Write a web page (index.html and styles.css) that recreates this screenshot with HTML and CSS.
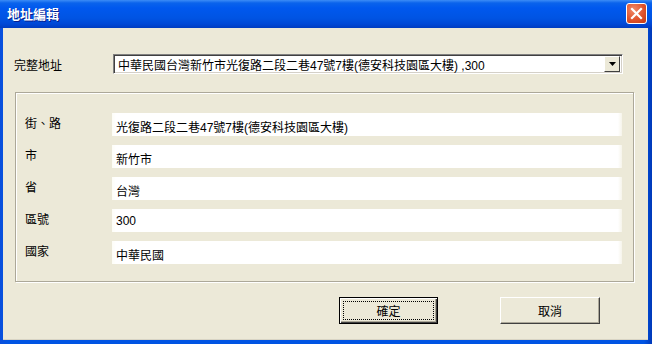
FILE: index.html
```html
<!DOCTYPE html>
<html lang="zh-Hant">
<head>
  <meta charset="UTF-8" />
  <title>地址編輯</title>
  <link rel="stylesheet" href="styles.css">
</head>
<body>

<div class="window">
  <div class="titlebar">
    <span class="title">地址編輯</span>
    <span class="close-btn">
      <svg width="13" height="13" viewBox="0 0 13 13">
        <path d="M2 2 L11 11 M11 2 L2 11" stroke="#fff" stroke-width="2.2" stroke-linecap="square"/>
      </svg>
    </span>
  </div>

  <div class="client">
    <div class="full-row">
      <span class="full-label">完整地址</span>
      <div class="combo">
        <span class="combo-text">中華民國台灣新竹市光復路二段二巷47號7樓(德安科技園區大樓) ,300</span>
        <span class="combo-btn">
          <svg width="7" height="4" viewBox="0 0 7 4"><path d="M0 0 H7 L3.5 4 Z" fill="#000"/></svg>
        </span>
      </div>
    </div>

    <div class="group">
      <div class="field-row">
        <span class="field-label">街、路</span>
        <div class="field">光復路二段二巷47號7樓(德安科技園區大樓)</div>
      </div>
      <div class="field-row">
        <span class="field-label">市</span>
        <div class="field">新竹市</div>
      </div>
      <div class="field-row">
        <span class="field-label">省</span>
        <div class="field">台灣</div>
      </div>
      <div class="field-row">
        <span class="field-label">區號</span>
        <div class="field">300</div>
      </div>
      <div class="field-row">
        <span class="field-label">國家</span>
        <div class="field">中華民國</div>
      </div>
    </div>

    <div class="buttons">
      <button class="btn btn-default"><span class="focus">確定</span></button>
      <button class="btn">取消</button>
    </div>
  </div>
</div>

</body>
</html>
```

FILE: styles.css
```css
body {
  margin: 0;
  font-family: "Liberation Sans", "Noto Sans CJK TC", sans-serif;
  font-size: 12px;
  color: #000;
  background: #fff;
}

.window {
  width: 652px;
  height: 344px;
  display: flex;
  flex-direction: column;
  background: linear-gradient(to right, #0a4fdc, #0054e3 8px, #0054e3 calc(100% - 8px), #0038b8);
  box-sizing: border-box;
}

.titlebar {
  height: 28px;
  display: flex;
  align-items: center;
  justify-content: space-between;
  padding: 0 5px 0 7px;
  background: linear-gradient(to bottom, #3c8cf6 0px, #0a63ec 3px, #0058ee 8px, #0054e3 18px, #0048d6 24px, #003cc0 28px);
}

.title {
  color: #fff;
  font-weight: bold;
  font-size: 13px;
  text-shadow: 1px 1px 0 #0a1e8c;
  margin-top: -1px;
}

.close-btn {
  width: 19px;
  height: 19px;
  border: 1px solid #fff;
  border-radius: 3px;
  background: radial-gradient(circle at 35% 30%, #f08a6a, #e0532c 55%, #c23a12);
  display: flex;
  align-items: center;
  justify-content: center;
  margin-top: -1px;
}

.client {
  flex: 1;
  margin: 0 4px 4px 3px;
  background: #ece9d8;
  padding: 26px 0 0 12px;
  border-bottom: 1px solid #d8d4c4;
}

.full-row {
  display: flex;
  align-items: center;
  height: 20px;
}

.full-label {
  width: 98px;
  position: relative;
  left: -1px;
}

.combo {
  width: 510px;
  height: 20px;
  box-sizing: border-box;
  border-top: 1px solid #808080;
  border-left: 1px solid #808080;
  border-right: 1px solid #fff;
  border-bottom: 1px solid #fff;
  box-shadow: inset 1px 1px 0 #404040, inset -1px -1px 0 #d4d0c8;
  background: #fff;
  display: flex;
  align-items: center;
  padding: 0 2px 0 4px;
}

.combo-text {
  flex: 1;
  white-space: nowrap;
  overflow: hidden;
}

.combo-btn {
  width: 16px;
  height: 16px;
  box-sizing: border-box;
  background: #ece9d8;
  border-top: 1px solid #fff;
  border-left: 1px solid #fff;
  border-right: 1px solid #404040;
  border-bottom: 1px solid #404040;
  display: flex;
  align-items: center;
  justify-content: center;
}

.group {
  width: 619px;
  height: 190px;
  box-sizing: border-box;
  margin-top: 18px;
  border: 1px solid #aca899;
  box-shadow: 1px 1px 0 #fff, inset 1px 1px 0 #fff;
  padding: 20px 0 0 9px;
  display: flex;
  flex-direction: column;
  gap: 9px;
}

.field-row {
  display: flex;
  height: 23px;
}

.field-label {
  width: 87px;
  padding-top: 1px;
}

.field {
  width: 510px;
  height: 23px;
  box-sizing: border-box;
  background: linear-gradient(to right, #fdfdf6, #ffffff 4px, #ffffff calc(100% - 4px), #f6f4ea);
  padding: 5px 0 0 4px;
  white-space: nowrap;
}

.buttons {
  display: flex;
  gap: 62px;
  margin-top: 15px;
  padding-left: 324px;
}

.btn {
  width: 100px;
  height: 27px;
  box-sizing: border-box;
  font-family: inherit;
  font-size: 12px;
  color: #000;
  background: #ece9d8;
  border-top: 1px solid #fff;
  border-left: 1px solid #fff;
  border-right: 1px solid #404040;
  border-bottom: 1px solid #404040;
  box-shadow: inset -1px -1px 0 #aca899;
  padding: 0;
}

.btn-default {
  width: 99px;
  border: 1px solid #000;
  box-shadow: inset 1px 1px 0 #fff, inset -1px -1px 0 #404040, inset -2px -2px 0 #aca899;
  padding: 3px;
}

.focus {
  display: flex;
  align-items: center;
  justify-content: center;
  height: 100%;
  border: 1px dotted #000;
  box-sizing: border-box;
}
```
